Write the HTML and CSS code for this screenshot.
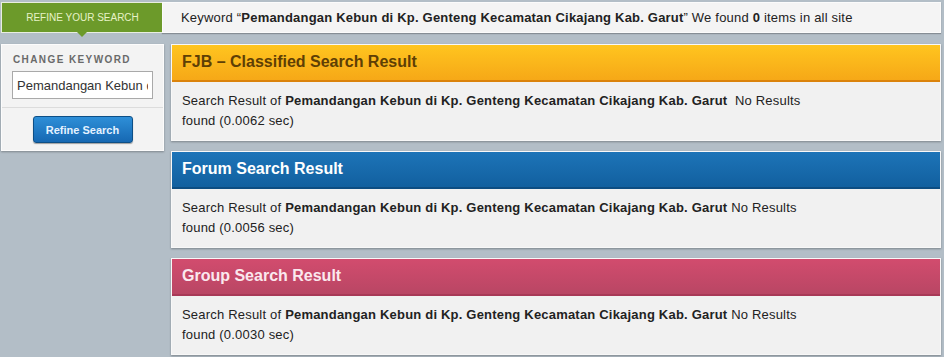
FILE: index.html
```html
<!DOCTYPE html>
<html>
<head>
<meta charset="utf-8">
<link rel="stylesheet" href="styles.css">
</head>
<body>
<div class="page">
  <div class="topbar">
    <div class="tab">REFINE YOUR SEARCH</div>
    <div class="keyword">Keyword “<b>Pemandangan Kebun di Kp. Genteng Kecamatan Cikajang Kab. Garut</b>” We found <b>0</b> items in all site</div>
  </div>
  <div class="main">
    <aside class="side">
      <div class="side-top">
        <div class="side-label">CHANGE KEYWORD</div>
        <input class="side-input" type="text" value="Pemandangan Kebun di Kp. Genteng Kecamatan Cikajang Kab. Garut">
      </div>
      <div class="side-bottom">
        <button class="btn">Refine Search</button>
      </div>
    </aside>
    <div class="results">
      <section class="box">
        <h2 class="box-head fjb">FJB – Classified Search Result</h2>
        <div class="box-body"><p class="res">Search Result of <b>Pemandangan Kebun di Kp. Genteng Kecamatan Cikajang Kab. Garut</b>&nbsp; No Results found (0.0062 sec)</p></div>
      </section>
      <section class="box">
        <h2 class="box-head forum">Forum Search Result</h2>
        <div class="box-body"><p class="res">Search Result of <b>Pemandangan Kebun di Kp. Genteng Kecamatan Cikajang Kab. Garut</b> No Results found (0.0056 sec)</p></div>
      </section>
      <section class="box">
        <h2 class="box-head group">Group Search Result</h2>
        <div class="box-body"><p class="res">Search Result of <b>Pemandangan Kebun di Kp. Genteng Kecamatan Cikajang Kab. Garut</b> No Results found (0.0030 sec)</p></div>
      </section>
    </div>
  </div>
</div>
</body>
</html>
```
FILE: styles.css
```css
html, body {
  margin: 0;
  padding: 0;
}
body {
  background: #b3bec7;
  font-family: "Liberation Sans", Arial, sans-serif;
  color: #222;
  width: 944px;
  height: 357px;
  overflow: hidden;
}
.page {
  padding: 2px 3px 0 1px;
}
.topbar {
  display: flex;
  height: 31px;
}
.tab {
  position: relative;
  width: 161px;
  background: #6c9a2a;
  border: 1px solid #e9eee0;
  border-right: none;
  color: #e8f2c8;
  font-size: 10px;
  display: flex;
  align-items: center;
  justify-content: center;
  box-sizing: border-box;
  height: 31px;
  padding-left: 1px;
}
.tab::after {
  content: "";
  position: absolute;
  left: 75px;
  bottom: -5px;
  border-left: 5px solid transparent;
  border-right: 5px solid transparent;
  border-top: 5px solid #6c9a2a;
}
.keyword {
  flex: 1;
  background: #f4f4f4;
  border: 1px solid #fbfbfb;
  box-shadow: 0 1px 1px rgba(0,0,0,0.25);
  box-sizing: border-box;
  height: 31px;
  font-size: 13px;
  letter-spacing: 0.2px;
  display: flex;
  align-items: center;
  padding-left: 18px;
  white-space: pre;
}
.main {
  display: flex;
  gap: 7px;
  margin-top: 11px;
}
.side {
  width: 163px;
  background: #f3f3f3;
  border: 1px solid #fcfcfc;
  box-sizing: border-box;
  height: 107px;
  align-self: flex-start;
  box-shadow: 0 1px 2px rgba(0,0,0,0.3);
}
.side-top {
  padding: 9px 10px 8px 10px;
  border-bottom: 1px solid #dcdcdc;
}
.side-label {
  font-size: 10px;
  font-weight: bold;
  color: #6a6a6a;
  letter-spacing: 1.4px;
  margin-bottom: 6px;
  padding-left: 1px;
}
.side-input {
  display: block;
  box-sizing: border-box;
  width: 141px;
  height: 28px;
  margin: 0;
  border: 1px solid #a9a9a9;
  background: #fff;
  font-family: "Liberation Sans", Arial, sans-serif;
  font-size: 13px;
  color: #333;
  padding: 0 4px;
  outline: none;
}
.side-bottom {
  display: flex;
  justify-content: center;
  padding-top: 8px;
}
.btn {
  width: 100px;
  height: 27px;
  border: 1px solid #0d4f86;
  border-radius: 3px;
  background: linear-gradient(#2e8fd8, #1668b2);
  color: #e5f2ff;
  font-family: "Liberation Sans", Arial, sans-serif;
  font-weight: bold;
  font-size: 11px;
  padding: 0;
  box-shadow: 0 1px 1px rgba(0,0,0,0.35);
}
.results {
  flex: 1;
  display: flex;
  flex-direction: column;
  gap: 10px;
}
.box {
  border: 1px solid #f8f8f8;
  background: #f1f1f1;
  box-shadow: 0 1px 2px rgba(0,0,0,0.3);
}
.box-head {
  margin: 0;
  height: 37px;
  box-sizing: border-box;
  padding: 0 0 2px 10px;
  display: flex;
  align-items: center;
  font-size: 16px;
  font-weight: bold;
}
.fjb {
  background: linear-gradient(#ffc51f, #f6a817);
  border-bottom: 2px solid #db830b;
  color: #5e3f05;
}
.forum {
  background: linear-gradient(#1d74b8, #12609f);
  border-bottom: 2px solid #0d4d82;
  color: #fff;
}
.group {
  background: linear-gradient(#d24c6e, #b94664);
  border-bottom: 2px solid #a83957;
  color: #fbe8ee;
}
.box-body {
  padding: 9px 10px 9px 10px;
  height: 58px;
  box-sizing: border-box;
}
.res {
  margin: 0;
  font-size: 13px;
  letter-spacing: 0.2px;
  line-height: 20px;
  width: 625px;
}
```
